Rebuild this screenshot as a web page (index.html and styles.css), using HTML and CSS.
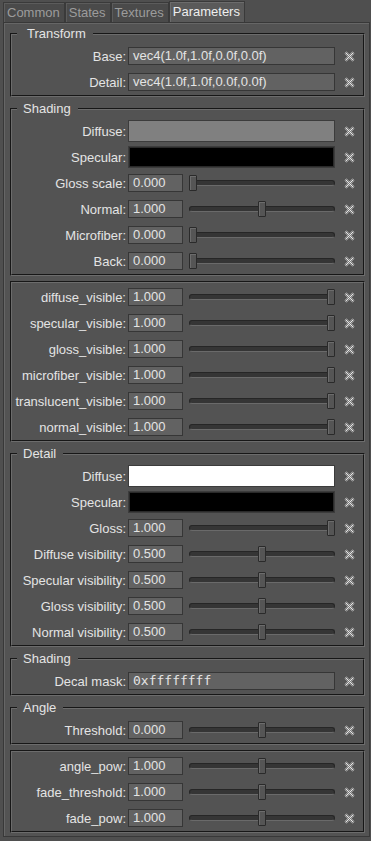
FILE: index.html
```html
<!DOCTYPE html>
<html lang="en">
<head>
    <meta charset='utf-8'>
    <meta name="viewport" content="width=device-width, initial-scale=1">
    <title>Material parameters</title>
    <link rel="stylesheet" href="styles.css">
</head>
<body>

<svg class="defs" width="0" height="0">
    <defs>
        <pattern id="dots" width="2" height="2" patternUnits="userSpaceOnUse">
            <rect width="2" height="2" fill="#7c7c7c"/>
            <rect width="1" height="1" fill="#e6e6e6"/>
            <rect x="1" y="1" width="1" height="1" fill="#e6e6e6"/>
        </pattern>
    </defs>
</svg>

<div class="tabs">
    <div class="tab">Common</div>
    <div class="tab">States</div>
    <div class="tab">Textures</div>
    <div class="tab active">Parameters</div>
</div>

<div class="panel">

    <fieldset class="group">
        <legend class="wide">Transform</legend>
        <div class="row">
            <label>Base:</label>
            <div class="field text">vec4(1.0f,1.0f,0.0f,0.0f)</div>
            <span class="clear"><svg width="11" height="11"><path d="M1.5 1.5L9.5 9.5M9.5 1.5L1.5 9.5" stroke="url(#dots)" stroke-width="2.6"/></svg></span>
        </div>
        <div class="row">
            <label>Detail:</label>
            <div class="field text">vec4(1.0f,1.0f,0.0f,0.0f)</div>
            <span class="clear"><svg width="11" height="11"><path d="M1.5 1.5L9.5 9.5M9.5 1.5L1.5 9.5" stroke="url(#dots)" stroke-width="2.6"/></svg></span>
        </div>
    </fieldset>

    <fieldset class="group">
        <legend>Shading</legend>
        <div class="row">
            <label>Diffuse:</label>
            <div class="field swatch gray"></div>
            <span class="clear"><svg width="11" height="11"><path d="M1.5 1.5L9.5 9.5M9.5 1.5L1.5 9.5" stroke="url(#dots)" stroke-width="2.6"/></svg></span>
        </div>
        <div class="row">
            <label>Specular:</label>
            <div class="field swatch black"></div>
            <span class="clear"><svg width="11" height="11"><path d="M1.5 1.5L9.5 9.5M9.5 1.5L1.5 9.5" stroke="url(#dots)" stroke-width="2.6"/></svg></span>
        </div>
        <div class="row">
            <label>Gloss scale:</label>
            <div class="num">0.000</div>
            <div class="slider"><div class="groove"></div><div class="thumb" style="--v:0"></div></div>
            <span class="clear"><svg width="11" height="11"><path d="M1.5 1.5L9.5 9.5M9.5 1.5L1.5 9.5" stroke="url(#dots)" stroke-width="2.6"/></svg></span>
        </div>
        <div class="row">
            <label>Normal:</label>
            <div class="num">1.000</div>
            <div class="slider"><div class="groove"></div><div class="thumb" style="--v:0.5"></div></div>
            <span class="clear"><svg width="11" height="11"><path d="M1.5 1.5L9.5 9.5M9.5 1.5L1.5 9.5" stroke="url(#dots)" stroke-width="2.6"/></svg></span>
        </div>
        <div class="row">
            <label>Microfiber:</label>
            <div class="num">0.000</div>
            <div class="slider"><div class="groove"></div><div class="thumb" style="--v:0"></div></div>
            <span class="clear"><svg width="11" height="11"><path d="M1.5 1.5L9.5 9.5M9.5 1.5L1.5 9.5" stroke="url(#dots)" stroke-width="2.6"/></svg></span>
        </div>
        <div class="row">
            <label>Back:</label>
            <div class="num">0.000</div>
            <div class="slider"><div class="groove"></div><div class="thumb" style="--v:0"></div></div>
            <span class="clear"><svg width="11" height="11"><path d="M1.5 1.5L9.5 9.5M9.5 1.5L1.5 9.5" stroke="url(#dots)" stroke-width="2.6"/></svg></span>
        </div>
    </fieldset>

    <fieldset class="group plain">
        <div class="row">
            <label>diffuse_visible:</label>
            <div class="num">1.000</div>
            <div class="slider"><div class="groove"></div><div class="thumb" style="--v:1"></div></div>
            <span class="clear"><svg width="11" height="11"><path d="M1.5 1.5L9.5 9.5M9.5 1.5L1.5 9.5" stroke="url(#dots)" stroke-width="2.6"/></svg></span>
        </div>
        <div class="row">
            <label>specular_visible:</label>
            <div class="num">1.000</div>
            <div class="slider"><div class="groove"></div><div class="thumb" style="--v:1"></div></div>
            <span class="clear"><svg width="11" height="11"><path d="M1.5 1.5L9.5 9.5M9.5 1.5L1.5 9.5" stroke="url(#dots)" stroke-width="2.6"/></svg></span>
        </div>
        <div class="row">
            <label>gloss_visible:</label>
            <div class="num">1.000</div>
            <div class="slider"><div class="groove"></div><div class="thumb" style="--v:1"></div></div>
            <span class="clear"><svg width="11" height="11"><path d="M1.5 1.5L9.5 9.5M9.5 1.5L1.5 9.5" stroke="url(#dots)" stroke-width="2.6"/></svg></span>
        </div>
        <div class="row">
            <label>microfiber_visible:</label>
            <div class="num">1.000</div>
            <div class="slider"><div class="groove"></div><div class="thumb" style="--v:1"></div></div>
            <span class="clear"><svg width="11" height="11"><path d="M1.5 1.5L9.5 9.5M9.5 1.5L1.5 9.5" stroke="url(#dots)" stroke-width="2.6"/></svg></span>
        </div>
        <div class="row">
            <label>translucent_visible:</label>
            <div class="num">1.000</div>
            <div class="slider"><div class="groove"></div><div class="thumb" style="--v:1"></div></div>
            <span class="clear"><svg width="11" height="11"><path d="M1.5 1.5L9.5 9.5M9.5 1.5L1.5 9.5" stroke="url(#dots)" stroke-width="2.6"/></svg></span>
        </div>
        <div class="row">
            <label>normal_visible:</label>
            <div class="num">1.000</div>
            <div class="slider"><div class="groove"></div><div class="thumb" style="--v:1"></div></div>
            <span class="clear"><svg width="11" height="11"><path d="M1.5 1.5L9.5 9.5M9.5 1.5L1.5 9.5" stroke="url(#dots)" stroke-width="2.6"/></svg></span>
        </div>
    </fieldset>

    <fieldset class="group">
        <legend>Detail</legend>
        <div class="row">
            <label>Diffuse:</label>
            <div class="field swatch white"></div>
            <span class="clear"><svg width="11" height="11"><path d="M1.5 1.5L9.5 9.5M9.5 1.5L1.5 9.5" stroke="url(#dots)" stroke-width="2.6"/></svg></span>
        </div>
        <div class="row">
            <label>Specular:</label>
            <div class="field swatch black"></div>
            <span class="clear"><svg width="11" height="11"><path d="M1.5 1.5L9.5 9.5M9.5 1.5L1.5 9.5" stroke="url(#dots)" stroke-width="2.6"/></svg></span>
        </div>
        <div class="row">
            <label>Gloss:</label>
            <div class="num">1.000</div>
            <div class="slider"><div class="groove"></div><div class="thumb" style="--v:1"></div></div>
            <span class="clear"><svg width="11" height="11"><path d="M1.5 1.5L9.5 9.5M9.5 1.5L1.5 9.5" stroke="url(#dots)" stroke-width="2.6"/></svg></span>
        </div>
        <div class="row">
            <label>Diffuse visibility:</label>
            <div class="num">0.500</div>
            <div class="slider"><div class="groove"></div><div class="thumb" style="--v:0.5"></div></div>
            <span class="clear"><svg width="11" height="11"><path d="M1.5 1.5L9.5 9.5M9.5 1.5L1.5 9.5" stroke="url(#dots)" stroke-width="2.6"/></svg></span>
        </div>
        <div class="row">
            <label>Specular visibility:</label>
            <div class="num">0.500</div>
            <div class="slider"><div class="groove"></div><div class="thumb" style="--v:0.5"></div></div>
            <span class="clear"><svg width="11" height="11"><path d="M1.5 1.5L9.5 9.5M9.5 1.5L1.5 9.5" stroke="url(#dots)" stroke-width="2.6"/></svg></span>
        </div>
        <div class="row">
            <label>Gloss visibility:</label>
            <div class="num">0.500</div>
            <div class="slider"><div class="groove"></div><div class="thumb" style="--v:0.5"></div></div>
            <span class="clear"><svg width="11" height="11"><path d="M1.5 1.5L9.5 9.5M9.5 1.5L1.5 9.5" stroke="url(#dots)" stroke-width="2.6"/></svg></span>
        </div>
        <div class="row">
            <label>Normal visibility:</label>
            <div class="num">0.500</div>
            <div class="slider"><div class="groove"></div><div class="thumb" style="--v:0.5"></div></div>
            <span class="clear"><svg width="11" height="11"><path d="M1.5 1.5L9.5 9.5M9.5 1.5L1.5 9.5" stroke="url(#dots)" stroke-width="2.6"/></svg></span>
        </div>
    </fieldset>

    <fieldset class="group">
        <legend>Shading</legend>
        <div class="row">
            <label>Decal mask:</label>
            <div class="field text mono">0xffffffff</div>
            <span class="clear"><svg width="11" height="11"><path d="M1.5 1.5L9.5 9.5M9.5 1.5L1.5 9.5" stroke="url(#dots)" stroke-width="2.6"/></svg></span>
        </div>
    </fieldset>

    <fieldset class="group">
        <legend>Angle</legend>
        <div class="row">
            <label>Threshold:</label>
            <div class="num">0.000</div>
            <div class="slider"><div class="groove"></div><div class="thumb" style="--v:0.5"></div></div>
            <span class="clear"><svg width="11" height="11"><path d="M1.5 1.5L9.5 9.5M9.5 1.5L1.5 9.5" stroke="url(#dots)" stroke-width="2.6"/></svg></span>
        </div>
    </fieldset>

    <fieldset class="group plain">
        <div class="row">
            <label>angle_pow:</label>
            <div class="num">1.000</div>
            <div class="slider"><div class="groove"></div><div class="thumb" style="--v:0.5"></div></div>
            <span class="clear"><svg width="11" height="11"><path d="M1.5 1.5L9.5 9.5M9.5 1.5L1.5 9.5" stroke="url(#dots)" stroke-width="2.6"/></svg></span>
        </div>
        <div class="row">
            <label>fade_threshold:</label>
            <div class="num">1.000</div>
            <div class="slider"><div class="groove"></div><div class="thumb" style="--v:0.5"></div></div>
            <span class="clear"><svg width="11" height="11"><path d="M1.5 1.5L9.5 9.5M9.5 1.5L1.5 9.5" stroke="url(#dots)" stroke-width="2.6"/></svg></span>
        </div>
        <div class="row">
            <label>fade_pow:</label>
            <div class="num">1.000</div>
            <div class="slider"><div class="groove"></div><div class="thumb" style="--v:0.5"></div></div>
            <span class="clear"><svg width="11" height="11"><path d="M1.5 1.5L9.5 9.5M9.5 1.5L1.5 9.5" stroke="url(#dots)" stroke-width="2.6"/></svg></span>
        </div>
    </fieldset>

</div>

</body>
</html>
```

FILE: styles.css
```css
body {
    margin: 0;
    background: #4f4f4f;
    color: #e4e4e4;
    font-family: "Liberation Sans", Arial, sans-serif;
    font-size: 13px;
}

.defs {
    position: absolute;
    width: 0;
    height: 0;
}

.tabs {
    display: flex;
    align-items: flex-end;
    height: 22px;
    padding-left: 3px;
}

.tab {
    height: 20px;
    line-height: 20px;
    padding: 0 4px 0 3px;
    border: 1px solid #3a3a3a;
    border-bottom: 0;
    box-shadow: inset 1px 1px 0 #5c5c5c;
    box-sizing: border-box;
    background: #4a4a4a;
    color: #9c9c9c;
}

.tab.active {
    height: 21px;
    background: #5a5a5a;
    color: #eeeeee;
    box-shadow: inset 1px 1px 0 #6c6c6c;
}

.panel {
    margin-left: 3px;
    width: 367px;
    box-sizing: border-box;
    padding: 4px 4px 3px 6px;
    border: 1px solid #383838;
    box-shadow: inset 1px 1px 0 #666666;
    background: #535353;
}

.group {
    margin: 5px 0 0 0;
    padding: 2px 0 0 0;
    min-width: 0;
    border: 2px groove #6c6c6c;
}

.group:first-child {
    margin-top: 0;
}

.group.plain {
    padding-top: 1px;
}

.group legend {
    margin-left: 5px;
    padding: 0 7px 0 6px;
    height: 14px;
    line-height: 14px;
    color: #e4e4e4;
}

.group legend.wide {
    padding-left: 10px;
}

.row {
    display: flex;
    align-items: center;
    height: 26px;
}

.row label {
    width: 114px;
    margin-right: 2px;
    text-align: right;
    white-space: nowrap;
}

.field {
    width: 207px;
    box-sizing: border-box;
    border: 1px solid #363636;
}

.field.text {
    height: 18px;
    line-height: 16px;
    padding-left: 4px;
    background: #626262;
}

.field.mono {
    font-family: "DejaVu Sans Mono", monospace;
    font-size: 13px;
}

.field.swatch {
    height: 22px;
    border-color: #3c3c3c;
    box-shadow: inset 0 0 0 1px #2a2a2a;
}

.swatch.gray {
    background: #808080;
    box-shadow: none;
}

.swatch.black {
    background: #000000;
}

.swatch.white {
    background: #ffffff;
    box-shadow: none;
}

.num {
    width: 55px;
    height: 18px;
    line-height: 16px;
    box-sizing: border-box;
    padding-left: 4px;
    border: 1px solid #363636;
    background: #626262;
}

.slider {
    position: relative;
    width: 146px;
    height: 18px;
    margin-left: 6px;
}

.groove {
    position: absolute;
    left: 0;
    right: 0;
    top: 6px;
    height: 6px;
    box-sizing: border-box;
    border: 1px solid #262626;
    border-bottom-color: #6a6a6a;
    border-radius: 3px;
    background: #353535;
}

.thumb {
    position: absolute;
    top: 1px;
    left: calc((100% - 8px) * var(--v));
    width: 8px;
    height: 16px;
    box-sizing: border-box;
    border: 1px solid #2a2a2a;
    border-radius: 1px;
    background: #555555;
    box-shadow: inset 1px 1px 0 #6c6c6c;
}

.clear {
    width: 28px;
    display: flex;
    justify-content: center;
    align-items: center;
    padding-top: 1px;
}

.clear svg {
    display: block;
}
```
